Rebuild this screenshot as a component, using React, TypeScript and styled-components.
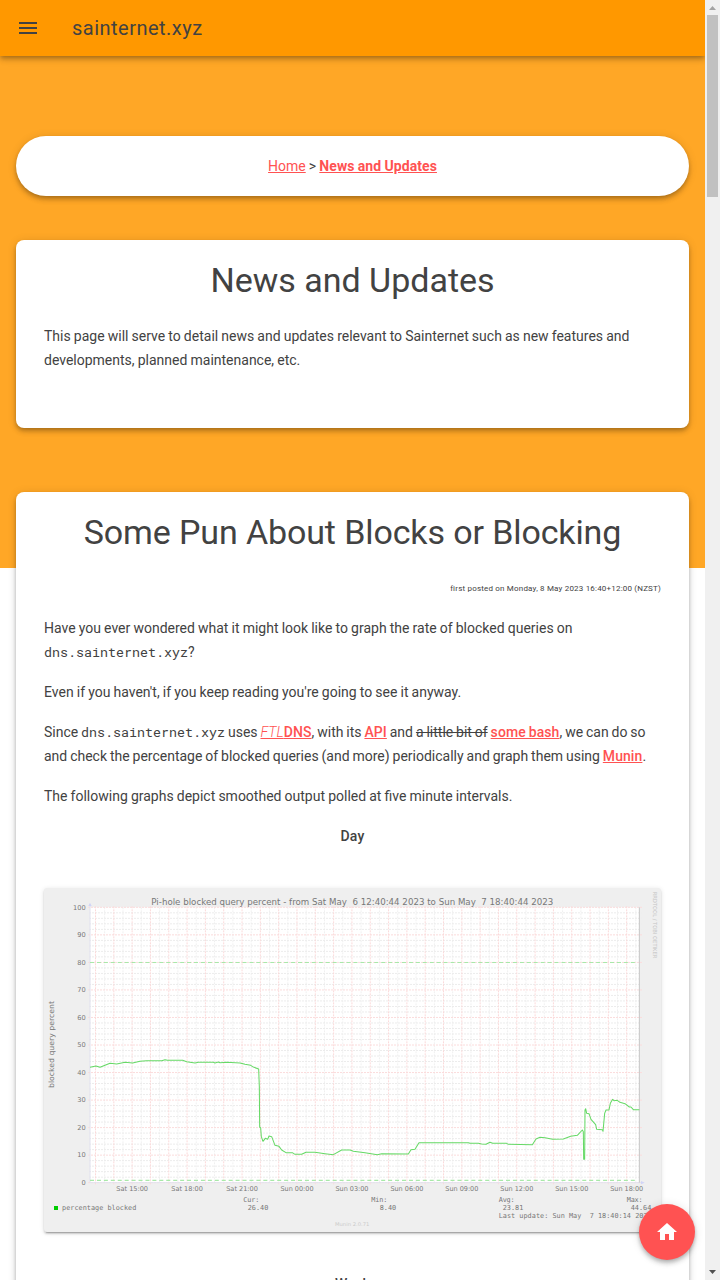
import React from "react";
import styled, { createGlobalStyle, css } from "styled-components";

const GlobalStyle = createGlobalStyle`
  *, *::before, *::after { box-sizing: border-box; }
  html, body { margin: 0; padding: 0; overflow: hidden; }
  body { font-family: Roboto, "Liberation Sans", sans-serif; color: #424242; background: #fff; }
`;

const elevation4 = css`
  box-shadow: 0 2px 4px -1px rgba(0, 0, 0, 0.2), 0 4px 5px 0 rgba(0, 0, 0, 0.14),
    0 1px 10px 0 rgba(0, 0, 0, 0.12);
`;

const Viewport = styled.div`
  display: grid;
  grid-template-columns: 1fr 15px;
  height: 1280px;
  overflow: hidden;
`;

const Page = styled.div`
  height: 1280px;
  overflow: hidden;
  background: linear-gradient(#ffa726 568px, #fff 568px);
`;

const TopBar = styled.header`
  height: 56px;
  display: flex;
  align-items: center;
  gap: 32px;
  padding: 0 16px;
  background: #ff9800;
  ${elevation4}
`;

const MenuIcon = styled.svg`
  width: 24px;
  height: 24px;
  fill: #424242;
`;

const SiteTitle = styled.span`
  font-size: 20px;
  line-height: 32px;
  letter-spacing: 0.48px;
`;

const Content = styled.main`
  display: flex;
  flex-direction: column;
  padding: 80px 16px 0;
`;

const Breadcrumb = styled.nav`
  height: 60px;
  border-radius: 30px;
  background: #fff;
  text-align: center;
  font-size: 14px;
  line-height: 60px;
  margin-bottom: 44px;
  word-spacing: -0.35px;
  ${elevation4}
`;

const Link = styled.a<{ $weight?: number }>`
  color: #ff5252;
  font-weight: ${(p) => p.$weight ?? 500};
  letter-spacing: ${(p) => (p.$weight === 400 ? "normal" : "0.08px")};
  text-decoration: underline;
`;

const Product = styled.i`
  font-weight: 300;
`;

const Card = styled.section<{ $height: number }>`
  flex: none;
  height: ${(p) => p.$height}px;
  margin-bottom: 64px;
  padding: 20px 28px;
  border-radius: 8px;
  background: #fff;
  ${elevation4}
`;

const Heading = styled.h1<{ $tight?: boolean }>`
  margin: 0 0 24px;
  font-size: 34px;
  line-height: 40px;
  font-weight: 400;
  letter-spacing: ${(p) => (p.$tight ? "-0.12px" : "normal")};
  text-align: center;
`;

const Posted = styled.p`
  margin: 0 0 15px;
  padding-top: 1px;
  text-align: right;
  font-size: 8px;
  line-height: 24px;
  letter-spacing: 0.19px;
`;

const Text = styled.p<{ $tight?: boolean }>`
  margin: 0 0 16px;
  font-size: 14px;
  line-height: 24px;
  word-spacing: ${(p) => (p.$tight ? -0.58 : -0.35)}px;
`;

const Code = styled.code`
  font-family: "Roboto Mono", "Liberation Mono", monospace;
  font-size: 13.333px;
  line-height: 1;
`;

const Period = styled.h2`
  margin: 0;
  font-size: 14px;
  line-height: 24px;
  font-weight: 500;
  letter-spacing: 0.2px;
  text-align: center;
`;

const Graph = styled.svg`
  display: block;
  width: 617px;
  height: 344px;
  margin: 40px 0;
  border-radius: 3px;
  background: #efefef;
  box-shadow: 0 3px 1px -2px rgba(0, 0, 0, 0.2), 0 2px 2px 0 rgba(0, 0, 0, 0.14),
    0 1px 5px 0 rgba(0, 0, 0, 0.12);
`;

const Fab = styled.button`
  position: fixed;
  left: 639px;
  top: 1204px;
  width: 56px;
  height: 56px;
  display: flex;
  align-items: center;
  justify-content: center;
  border: 0;
  border-radius: 50%;
  background: #ff5252;
  ${elevation4}
`;

const ScrollTrack = styled.div`
  display: flex;
  flex-direction: column;
  align-items: center;
  background: #f0f0f0;
  z-index: 1;
`;

const ScrollArrow = styled.svg`
  width: 15px;
  height: 15px;
  display: block;
`;

const ScrollThumb = styled.div`
  width: 11px;
  height: 182px;
  margin-bottom: auto;
  background: #c1c1c1;
`;

// Plot area of the graph, in drawing units (three per pixel).
const plot = { left: 138, right: 1786, top: 58, bottom: 884 };
const hour = 54.95;
const firstHour = 154.5;
const yOf = (v: number) => plot.bottom - ((plot.bottom - plot.top) * v) / 100;

const series =
  "138,538 156,534 168,538 183,532 198,526 218,528 243,523 266,525 288,520 308,518 353,518 363,515 370,517 416,517 428,521 453,525 463,523 508,523 513,525 523,522 528,524 548,523 588,525 603,529 620,532 630,538 644,543 646,596 647,718 650,719 652,746 657,760 664,751 671,754 " +
  "675,744 683,746 693,772 705,775 713,786 726,794 745,794 753,799 773,799 786,793 813,793 843,797 868,800 893,786 918,786 928,790 963,794 1000,800 1013,797 1093,798 1101,785 1113,784 1125,764 1273,764 1278,766 1303,766 1313,768 " +
  "1326,769 1338,763 1346,766 1388,766 1393,769 1465,770 1476,753 1488,748 1503,749 1526,754 1558,753 1580,745 1600,742 1615,726 1618,731 1619,814 1622,814 1623,666 1625,662 1628,676 1635,677 1641,694 1655,710 1658,724 1675,725 1677,730 1682,676 1686,666 1695,666 1699,646 1706,634 1710,638 1720,637 1728,643 1743,647 1756,657 1761,657 1768,665 1786,665";

const timeLabels = [
  "Sat 15:00", "Sat 18:00", "Sat 21:00", "Sun 00:00", "Sun 03:00",
  "Sun 06:00", "Sun 09:00", "Sun 12:00", "Sun 15:00", "Sun 18:00",
];

const stats = [
  { label: "Cur:", value: "26.40", lx: 598, vx: 611 },
  { label: "Min:", value: "8.40", lx: 982, vx: 1007 },
  { label: "Avg:", value: "23.81", lx: 1364, vx: 1376 },
  { label: "Max:", value: "44.64", lx: 1748, vx: 1760 },
];

const sans = '"DejaVu Sans", sans-serif';
const mono = '"DejaVu Sans Mono", monospace';

function DayGraph() {
  const halfHours = Array.from({ length: 60 }, (_, i) => firstHour + (i * hour) / 2);
  return (
    <Graph viewBox="0 0 1851 1032">
      <rect x={plot.left} y={plot.top} width={plot.right - plot.left} height={plot.bottom - plot.top} fill="#fff" />
      <g strokeWidth="3" strokeDasharray="6 3">
        {halfHours.map((x, i) =>
          i % 2 ? (
            <line key={i} x1={x} x2={x} y1={plot.top} y2={plot.bottom} stroke="#f0f0f0" />
          ) : null
        )}
        {Array.from({ length: 51 }, (_, i) =>
          i % 5 ? (
            <line key={i} x1={plot.left - 3} x2={plot.right + 6} y1={yOf(i * 2)} y2={yOf(i * 2)} stroke="#ececec" />
          ) : null
        )}
        {halfHours.map((x, i) =>
          i % 2 ? null : (
            <line key={i} x1={x} x2={x} y1={plot.top - 3} y2={plot.bottom + 6} stroke="#fbdada" />
          )
        )}
        {Array.from({ length: 11 }, (_, i) => (
          <line key={i} x1={plot.left - 6} x2={plot.right + 8} y1={yOf(i * 10)} y2={yOf(i * 10)} stroke="#fbdcdc" />
        ))}
      </g>
      <line x1={plot.left} x2={plot.left} y1={plot.top - 8} y2={plot.bottom} stroke="#e0e0ee" strokeWidth="3" />
      <line x1={plot.left} x2={plot.right + 12} y1={plot.bottom} y2={plot.bottom} stroke="#e2e2ee" strokeWidth="3" />
      <line x1={plot.right} x2={plot.right} y1={plot.top} y2={plot.bottom} stroke="#c6c6c6" strokeWidth="3" />
      <path d="M133 54 L138 44 L143 54Z M1791 879 L1802 884 L1791 889Z" fill="#d0d4f8" />
      <g stroke="#a9e8a9" strokeWidth="3.5" strokeDasharray="12 8.8">
        <line x1={plot.left} x2={plot.right - 6} y1="223.5" y2="223.5" />
        <line x1={plot.left} x2={plot.right - 6} y1="877" y2="877" />
      </g>
      <polyline points={series} fill="none" stroke="#66d966" strokeWidth="3.1" strokeLinejoin="round" />
      <g fontFamily={sans} fontSize="20" fill="#777">
        <text x="322" y="50" fontSize="27" textLength="1206" lengthAdjust="spacingAndGlyphs">
          {"Pi-hole blocked query percent - from Sat May\u00a0 6 12:40:44 2023 to Sun May\u00a0 7 18:40:44 2023"}
        </text>
        {Array.from({ length: 11 }, (_, i) => (
          <text key={i} x="125" y={yOf(i * 10) + 7} textAnchor="end">{i * 10}</text>
        ))}
        {timeLabels.map((t, i) => (
          <text key={t} x={264.5 + i * hour * 3} y="910" textAnchor="middle" textLength={i < 3 ? 95 : 99} lengthAdjust="spacingAndGlyphs">{t}</text>
        ))}
        <text transform="translate(29 600) rotate(-90)" fontSize="22" textLength="261" lengthAdjust="spacingAndGlyphs">blocked query percent</text>
        <text transform="translate(1827 11) rotate(90)" fontSize="16" textLength="200" lengthAdjust="spacingAndGlyphs" fill="#c4c4c4">RRDTOOL / TOBI OETIKER</text>
        <text x="873" y="1014" fontSize="15" textLength="103" lengthAdjust="spacingAndGlyphs" fill="#cbcbcb">Munin 2.0.71</text>
      </g>
      <rect x="30" y="954" width="12" height="12" fill="#00cc00" />
      <g fontFamily={mono} fontSize="20.5" fill="#777">
        <text x="54" y="966" textLength="223">percentage blocked</text>
        {stats.map((s) => (
          <g key={s.label}>
            <text x={s.lx} y="941" textLength="48">{s.label}</text>
            <text x={s.vx} y="966" textLength={s.value.length * 12.4}>{s.value}</text>
          </g>
        ))}
        <text x="1364" y="991" textLength="459">{"Last update: Sun May\u00a0 7 18:40:14 2023"}</text>
      </g>
    </Graph>
  );
}

export default function App() {
  return (
    <>
      <GlobalStyle />
      <Viewport>
        <Page>
          <TopBar>
            <MenuIcon viewBox="0 0 24 24">
              <path d="M3 18h18v-2H3v2zm0-5h18v-2H3v2zm0-7v2h18V6H3z" />
            </MenuIcon>
            <SiteTitle>sainternet.xyz</SiteTitle>
          </TopBar>
          <Content>
            <Breadcrumb>
              <Link $weight={400}>Home</Link> &gt; <Link $weight={700}>News and Updates</Link>
            </Breadcrumb>
            <Card $height={188}>
              <Heading>News and Updates</Heading>
              <Text>
                This page will serve to detail news and updates relevant to Sainternet such as new features and
                developments, planned maintenance, etc.
              </Text>
            </Card>
            <Card $height={1200}>
              <Heading $tight>Some Pun About Blocks or Blocking</Heading>
              <Posted>first posted on Monday, 8 May 2023 16:40+12:00 (NZST)</Posted>
              <Text>
                Have you ever wondered what it might look like to graph the rate of blocked queries on{" "}
                <Code>dns.sainternet.xyz</Code>?
              </Text>
              <Text>Even if you haven't, if you keep reading you're going to see it anyway.</Text>
              <Text $tight>
                Since <Code>dns.sainternet.xyz</Code> uses{" "}
                <Link><Product>FTL</Product>DNS</Link>, with its <Link>API</Link> and{" "}
                <s>a little bit of</s> <Link>some bash</Link>, we can do so and check the percentage of
                blocked queries (and more) periodically and graph them using <Link>Munin</Link>.
              </Text>
              <Text>The following graphs depict smoothed output polled at five minute intervals.</Text>
              <Period>Day</Period>
              <DayGraph />
              <Period>Week</Period>
            </Card>
          </Content>
        </Page>
        <ScrollTrack>
          <ScrollArrow viewBox="0 0 15 15"><path d="M4 10h7L7.5 6z" fill="#a3a3a3" /></ScrollArrow>
          <ScrollThumb />
          <ScrollArrow viewBox="0 0 15 15"><path d="M4 5h7L7.5 9z" fill="#505050" /></ScrollArrow>
        </ScrollTrack>
      </Viewport>
      <Fab aria-label="Home">
        <svg width="24" height="24" viewBox="0 0 24 24" fill="#fff">
          <path d="M10 20v-6h4v6h5v-8h3L12 3 2 12h3v8z" />
        </svg>
      </Fab>
    </>
  );
}
